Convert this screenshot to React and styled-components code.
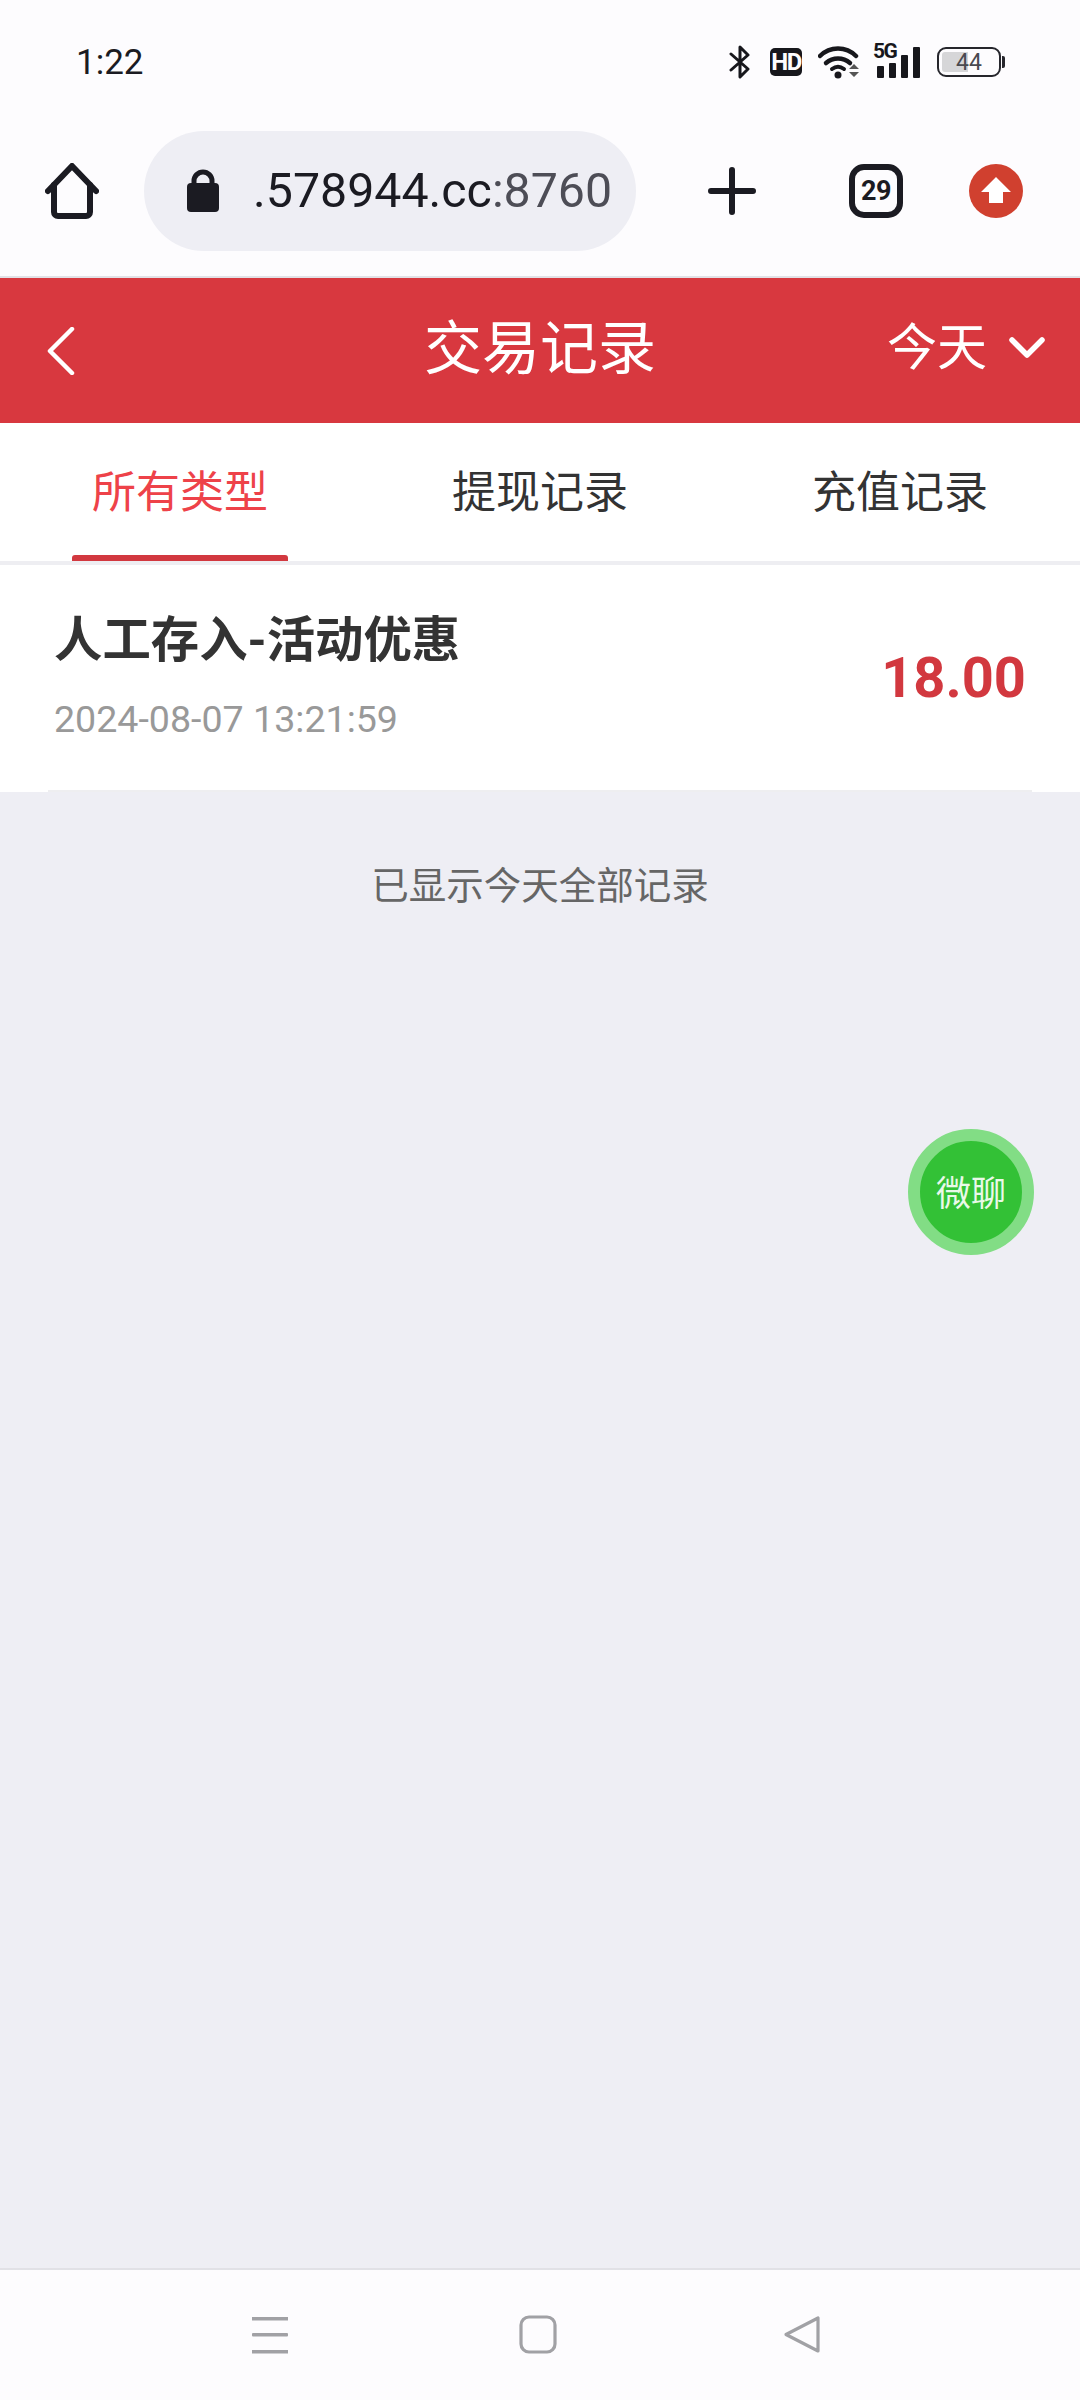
import React from 'react';
import styled, { createGlobalStyle } from 'styled-components';

const GlobalStyle = createGlobalStyle`
  html, body {
    margin: 0;
    padding: 0;
    background: #eeeef4;
  }

  body {
    font-family: Roboto, "Noto Sans CJK SC", sans-serif;
  }
`;

const Page = styled.div`
  position: relative;
  display: flex;
  flex-direction: column;
  width: 1080px;
  height: 2400px;
  overflow: hidden;
`;

const StatusBar = styled.div`
  display: flex;
  align-items: center;
  justify-content: space-between;
  box-sizing: border-box;
  height: 116px;
  padding: 8px 76px 0 76px;
  background: #fdfcfe;
`;

const Clock = styled.div`
  font-size: 35px;
  color: #1b1b22;
`;

const StatusIcons = styled.div`
  display: flex;
  align-items: center;
  height: 40px;
  margin-right: 3px;
`;

const Hd = styled.div`
  display: flex;
  align-items: center;
  justify-content: center;
  width: 32px;
  height: 28px;
  margin: 0 16px 0 19px;
  border-radius: 5px;
  background: #17171c;
  color: #fdfcfe;
  font-size: 24px;
  font-weight: 700;
  letter-spacing: -1.5px;
`;

const Signal = styled.div`
  position: relative;
  width: 45px;
  height: 32px;
  margin: 0 16px 0 16px;
`;

const FiveG = styled.span`
  position: absolute;
  left: -3px;
  top: -6px;
  font-size: 21px;
  line-height: 22px;
  font-weight: 700;
  letter-spacing: -1.5px;
  color: #17171c;
`;

const Battery = styled.div`
  position: relative;
  display: flex;
  align-items: center;
  justify-content: center;
  box-sizing: border-box;
  width: 64px;
  height: 30px;
  border: 2px solid #26262c;
  border-radius: 9px;
  color: #4a4a50;
  font-size: 23px;

  &::before {
    content: '';
    position: absolute;
    left: 3px;
    top: 3px;
    bottom: 3px;
    width: 26px;
    border-radius: 3px 0 0 3px;
    background: #d6d6d8;
  }

  &::after {
    content: '';
    position: absolute;
    right: -6px;
    top: 7px;
    width: 3px;
    height: 12px;
    border-radius: 0 2px 2px 0;
    background: #26262c;
  }
`;

const BatteryLevel = styled.span`
  position: relative;
`;

const BrowserBar = styled.div`
  display: flex;
  align-items: center;
  box-sizing: border-box;
  height: 162px;
  padding: 0 57px 10px 45px;
  border-bottom: 2px solid #e2e1e6;
  background: #fdfcfe;
`;

const HomeButton = styled.svg`
  flex: none;
  width: 54px;
  height: 56px;
  margin-right: 45px;
`;

const UrlPill = styled.div`
  display: flex;
  align-items: center;
  flex: none;
  box-sizing: border-box;
  width: 492px;
  height: 120px;
  padding-left: 42px;
  border-radius: 60px;
  background: #eeeef4;
`;

const LockIcon = styled.svg`
  flex: none;
  width: 34px;
  height: 44px;
  margin-right: 33px;
`;

const UrlText = styled.div`
  font-size: 48.3px;
  line-height: 60px;
  color: #1b1b22;
  white-space: nowrap;
`;

const UrlPort = styled.span`
  color: #4d4d56;
`;

const PlusIcon = styled.svg`
  flex: none;
  width: 48px;
  height: 48px;
  margin: 0 1px 0 72px;
`;

const TabCount = styled.div`
  display: flex;
  align-items: center;
  justify-content: center;
  flex: none;
  box-sizing: border-box;
  width: 54px;
  height: 54px;
  margin-left: 92px;
  border: 6px solid #1b1b22;
  border-radius: 15px;
  color: #1b1b22;
  font-size: 27px;
  font-weight: 700;
  letter-spacing: -0.5px;
`;

const UpdateIcon = styled.svg`
  flex: none;
  width: 54px;
  height: 54px;
  margin-left: 66px;
`;

const Header = styled.div`
  display: flex;
  align-items: center;
  justify-content: space-between;
  position: relative;
  box-sizing: border-box;
  height: 145px;
  padding: 0 35px 0 47px;
  background: #d8383f;
  color: #fff;
`;

const Title = styled.div`
  position: absolute;
  left: 0;
  right: 0;
  padding-bottom: 3px;
  text-align: center;
  font-size: 58px;
  line-height: 70px;
`;

const DateFilter = styled.div`
  display: flex;
  align-items: center;
  gap: 22px;
  padding-bottom: 6px;
  font-size: 50px;
  line-height: 60px;
`;

const Tabs = styled.div`
  display: flex;
  box-sizing: border-box;
  height: 142px;
  border-bottom: 4px solid #eeeef2;
  background: #fff;
`;

const Tab = styled.div`
  position: relative;
  flex: 1;
  display: flex;
  align-items: center;
  justify-content: center;
  padding-bottom: 6px;
  font-size: 44px;
  color: ${(props) => (props.$active ? '#ee4249' : '#333')};

  ${(props) => props.$active && `
    &::after {
      content: '';
      position: absolute;
      left: 72px;
      bottom: 0;
      width: 216px;
      height: 6px;
      border-radius: 3px 3px 0 0;
      background: #d2383f;
    }
  `}
`;

const Records = styled.div`
  background: #fff;
`;

const RecordRow = styled.div`
  display: flex;
  align-items: center;
  justify-content: space-between;
  box-sizing: border-box;
  height: 227px;
  margin: 0 48px;
  padding: 0 6px 0 6px;
  border-bottom: 2px solid #eeeef0;
`;

const RecordInfo = styled.div`
  display: flex;
  flex-direction: column;
  gap: 26px;
  padding-bottom: 2px;
`;

const RecordName = styled.div`
  font-size: 48.4px;
  line-height: 58px;
  font-weight: 700;
  color: #333;
`;

const RecordTime = styled.div`
  font-size: 37.6px;
  line-height: 46px;
  color: #999;
`;

const Amount = styled.div`
  font-size: 56px;
  line-height: 64px;
  font-weight: 700;
  color: #d2383f;
`;

const Content = styled.div`
  flex: 1;
  background: #eeeef4;
`;

const EndNote = styled.div`
  padding-top: 70px;
  text-align: center;
  font-size: 37.5px;
  line-height: 48px;
  color: #666;
`;

const NavBar = styled.div`
  display: flex;
  align-items: center;
  box-sizing: border-box;
  height: 132px;
  padding: 0 0 0 250px;
  border-top: 2px solid #e1e1e6;
  background: #fdfcfe;
`;

const NavIcon = styled.svg`
  flex: none;
  width: 40px;
  height: 40px;
  margin-right: ${(props) => props.$gap || 0}px;
`;

const ChatButton = styled.div`
  position: absolute;
  left: 908px;
  top: 1129px;
  display: flex;
  align-items: center;
  justify-content: center;
  box-sizing: border-box;
  width: 126px;
  height: 126px;
  padding-bottom: 3px;
  border: 12px solid #82dd85;
  border-radius: 50%;
  background: #33c136;
  color: #e9f9e9;
  font-size: 35px;
  white-space: nowrap;
`;

const BluetoothIcon = () => (
  <svg width="22" height="34" viewBox="0 0 22 34" fill="none" stroke="#17171c" strokeWidth="3">
    <path d="M2 9l17 15-8 8V2l8 8L2 25" strokeLinejoin="round" strokeLinecap="round" />
  </svg>
);

const WifiIcon = () => (
  <svg width="42" height="34" viewBox="0 0 42 34" fill="none">
    <path d="M2 11C12 1 28 1 38 11" stroke="#17171c" strokeWidth="4.5" strokeLinecap="round" />
    <path d="M8 18c7-6 17-6 24 0" stroke="#17171c" strokeWidth="4.5" strokeLinecap="round" />
    <path d="M14 24c4-3 8-3 12 0" stroke="#17171c" strokeWidth="4" strokeLinecap="round" />
    <circle cx="20" cy="30" r="3.5" fill="#17171c" />
    <path d="M31 24l5-5 5 5zM31 27l5 5 5-5z" fill="#555" />
  </svg>
);

const SignalBars = () => (
  <svg width="45" height="32" viewBox="0 0 45 32" fill="#17171c">
    <rect x="1" y="20" width="7" height="12" rx="1" />
    <rect x="13" y="17" width="7" height="15" rx="1" />
    <rect x="25" y="9" width="7" height="23" rx="1" />
    <rect x="37" y="1" width="7" height="31" rx="1" />
  </svg>
);

const App = () => (
  <Page>
    <GlobalStyle />
    <StatusBar>
      <Clock>1:22</Clock>
      <StatusIcons>
        <BluetoothIcon />
        <Hd>HD</Hd>
        <WifiIcon />
        <Signal>
          <SignalBars />
          <FiveG>5G</FiveG>
        </Signal>
        <Battery>
          <BatteryLevel>44</BatteryLevel>
        </Battery>
      </StatusIcons>
    </StatusBar>

    <BrowserBar>
      <HomeButton viewBox="0 0 54 56" fill="none" stroke="#1b1b22" strokeWidth="6" strokeLinecap="round" strokeLinejoin="round">
        <path d="M3 28L27 3l24 25" />
        <path d="M9 22v27a4 4 0 0 0 4 4h28a4 4 0 0 0 4-4V22" />
      </HomeButton>
      <UrlPill>
        <LockIcon viewBox="0 0 34 44">
          <path d="M8 18v-6a9 9 0 0 1 18 0v6" fill="none" stroke="#1b1b22" strokeWidth="5" />
          <rect x="1" y="14" width="32" height="29" rx="4" fill="#1b1b22" />
        </LockIcon>
        <UrlText>.578944.cc<UrlPort>:8760</UrlPort></UrlText>
      </UrlPill>
      <PlusIcon viewBox="0 0 48 48" stroke="#1b1b22" strokeWidth="6" strokeLinecap="round">
        <path d="M24 3v42M3 24h42" />
      </PlusIcon>
      <TabCount>29</TabCount>
      <UpdateIcon viewBox="0 0 54 54">
        <circle cx="27" cy="27" r="27" fill="#d0402f" />
        <path d="M27 13l15 15h-8v11H20V28h-8z" fill="#fff" />
      </UpdateIcon>
    </BrowserBar>

    <Header>
      <svg width="28" height="48" viewBox="0 0 28 48" fill="none" stroke="#fff" strokeWidth="4.5" strokeLinecap="round" strokeLinejoin="round">
        <path d="M25 2L3 24l22 22" />
      </svg>
      <Title>交易记录</Title>
      <DateFilter>
        今天
        <svg width="36" height="22" viewBox="0 0 36 22" fill="none" stroke="#fff" strokeWidth="5.5" strokeLinecap="round" strokeLinejoin="round">
          <path d="M3 3l15 15L33 3" />
        </svg>
      </DateFilter>
    </Header>

    <Tabs>
      <Tab $active>所有类型</Tab>
      <Tab>提现记录</Tab>
      <Tab>充值记录</Tab>
    </Tabs>

    <Records>
      <RecordRow>
        <RecordInfo>
          <RecordName>人工存入-活动优惠</RecordName>
          <RecordTime>2024-08-07 13:21:59</RecordTime>
        </RecordInfo>
        <Amount>18.00</Amount>
      </RecordRow>
    </Records>

    <Content>
      <EndNote>已显示今天全部记录</EndNote>
    </Content>

    <ChatButton>微聊</ChatButton>

    <NavBar>
      <NavIcon viewBox="0 0 40 40" $gap={228} fill="#a1a1a5">
        <rect x="2" y="2" width="36" height="3.5" />
        <rect x="2" y="18" width="36" height="3.5" rx="1" />
        <rect x="2" y="35" width="36" height="3.5" />
      </NavIcon>
      <NavIcon viewBox="0 0 40 40" $gap={225} fill="none" stroke="#a1a1a5" strokeWidth="3.2">
        <rect x="3" y="2" width="34" height="35" rx="8" />
      </NavIcon>
      <NavIcon viewBox="0 0 40 40" fill="none" stroke="#a1a1a5" strokeWidth="3.2" strokeLinejoin="round">
        <path d="M35 3v33L3 19.500z" />
      </NavIcon>
    </NavBar>
  </Page>
);

export default App;
